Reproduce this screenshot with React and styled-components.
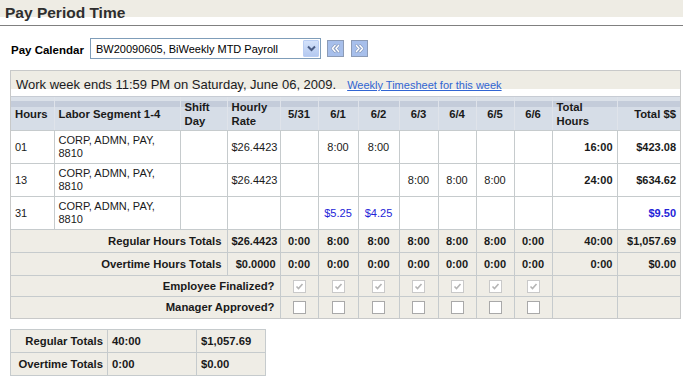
import React from 'react';
import styled, { createGlobalStyle } from 'styled-components';

const GlobalStyle = createGlobalStyle`
    body {
        margin: 0;
        background: #fff;
        font-family: "Liberation Sans", Arial, sans-serif;
        color: #111;
    }
`;

const days = ['5/31', '6/1', '6/2', '6/3', '6/4', '6/5', '6/6'];
const widths = [43, 126, 47, 53, 38, 40, 41, 39, 38, 38, 38, 65, 63];

const entries = [
    { code: '01', rate: '$26.4423', days: ['', '8:00', '8:00', '', '', '', ''], hours: '16:00', total: '$423.08' },
    { code: '13', rate: '$26.4423', days: ['', '', '', '8:00', '8:00', '8:00', ''], hours: '24:00', total: '$634.62' },
    { code: '31', rate: '', days: ['', '$5.25', '$4.25', '', '', '', ''], hours: '', total: '$9.50', money: true },
];

const totals = [
    { label: 'Regular Hours Totals', rate: '$26.4423', days: ['0:00', '8:00', '8:00', '8:00', '8:00', '8:00', '0:00'], hours: '40:00', total: '$1,057.69', h: 23 },
    { label: 'Overtime Hours Totals', rate: '$0.0000', days: ['0:00', '0:00', '0:00', '0:00', '0:00', '0:00', '0:00'], hours: '0:00', total: '$0.00', h: 23 },
];

function Chevrons({ dir }) {
    const d = dir === 'left'
        ? 'M8 5 L5 8.5 L8 12 M12 5 L9 8.5 L12 12'
        : 'M5 5 L8 8.5 L5 12 M9 5 L12 8.5 L9 12';
    return (
        <svg width="15" height="15" viewBox="0 0 17 17">
            <path d={d} fill="none" stroke="#7f93b8" strokeWidth="3" strokeLinecap="round" strokeLinejoin="round" />
            <path d={d} fill="none" stroke="#fff" strokeWidth="1.7" strokeLinecap="round" strokeLinejoin="round" />
        </svg>
    );
}

function CheckBox({ checked }) {
    return (
        <Box $checked={checked}>
            {checked && (
                <svg width="9" height="9" viewBox="0 0 9 9">
                    <path d="M1.5 4.5 L3.5 6.5 L7.5 2" fill="none" stroke="#b5b5b5" strokeWidth="1.6" />
                </svg>
            )}
        </Box>
    );
}

function App() {
    return (
        <Page>
            <GlobalStyle />
            <TitleBar>
                <h1>Pay Period Time</h1>
            </TitleBar>
            <Rule />
            <CalendarRow>
                <label>Pay Calendar</label>
                <SelectBox>
                    <span>BW20090605, BiWeekly MTD Payroll</span>
                    <ArrowButton>
                        <svg width="9" height="7" viewBox="0 0 9 7">
                            <path d="M1 1.5 L4.5 5 L8 1.5" fill="none" stroke="#4a5d85" strokeWidth="2" />
                        </svg>
                    </ArrowButton>
                </SelectBox>
                <NavButton><Chevrons dir="left" /></NavButton>
                <NavButton><Chevrons dir="right" /></NavButton>
            </CalendarRow>

            <Panel>
                <WeekBar>
                    Work week ends 11:59 PM on Saturday, June 06, 2009.
                    <a href="#week">Weekly Timesheet for this week</a>
                </WeekBar>
                <Spacer />
                <TimeTable>
                    <colgroup>
                        {widths.map((w, i) => <Col key={i} $w={w} />)}
                    </colgroup>
                    <thead>
                        <tr>
                            <Head>Hours</Head>
                            <Head>Labor Segment 1-4</Head>
                            <Head>Shift<br />Day</Head>
                            <Head>Hourly<br />Rate</Head>
                            {days.map(d => <Head key={d} $align="center">{d}</Head>)}
                            <Head>Total<br />Hours</Head>
                            <Head $align="right">Total $$</Head>
                        </tr>
                    </thead>
                    <tbody>
                        {entries.map(e => (
                            <Row key={e.code} $h={33}>
                                <Cell>{e.code}</Cell>
                                <Cell>CORP, ADMN, PAY,<br />8810</Cell>
                                <Cell />
                                <Cell>{e.rate}</Cell>
                                {e.days.map((v, i) => (
                                    <Cell key={i} $align="center" $blue={e.money}>{v}</Cell>
                                ))}
                                <Cell $align="right" $bold>{e.hours}</Cell>
                                <Cell $align="right" $bold $blue={e.money}>{e.total}</Cell>
                            </Row>
                        ))}
                        {totals.map(t => (
                            <Row key={t.label} $beige $h={t.h}>
                                <Cell colSpan={3} $align="right" $bold $label>{t.label}</Cell>
                                <Cell $align="right" $bold>{t.rate}</Cell>
                                {t.days.map((v, i) => (
                                    <Cell key={i} $align="center" $bold>{v}</Cell>
                                ))}
                                <Cell $align="right" $bold>{t.hours}</Cell>
                                <Cell $align="right" $bold>{t.total}</Cell>
                            </Row>
                        ))}
                        <Row $beige $h={21}>
                            <Cell colSpan={4} $align="right" $bold $label>Employee Finalized?</Cell>
                            {days.map(d => (
                                <Cell key={d} $align="center"><CheckBox checked /></Cell>
                            ))}
                            <Cell />
                            <Cell />
                        </Row>
                        <Row $beige $h={21}>
                            <Cell colSpan={4} $align="right" $bold $label>Manager Approved?</Cell>
                            {days.map(d => (
                                <Cell key={d} $align="center"><CheckBox /></Cell>
                            ))}
                            <Cell />
                            <Cell />
                        </Row>
                    </tbody>
                </TimeTable>
            </Panel>

            <SummaryTable>
                <colgroup>
                    <Col $w={97} />
                    <Col $w={89} />
                    <Col $w={69} />
                </colgroup>
                <tbody>
                    <tr>
                        <SumCell $align="right">Regular Totals</SumCell>
                        <SumCell>40:00</SumCell>
                        <SumCell>$1,057.69</SumCell>
                    </tr>
                    <tr>
                        <SumCell $align="right">Overtime Totals</SumCell>
                        <SumCell>0:00</SumCell>
                        <SumCell>$0.00</SumCell>
                    </tr>
                </tbody>
            </SummaryTable>
        </Page>
    );
}

const Page = styled.div`
    width: 683px;
    padding-bottom: 4px;
`;

const TitleBar = styled.div`
    height: 17px;
    background: #eeece4;
    h1 {
        margin: 0;
        padding: 4px 0 0 5px;
        font-size: 15.5px;
        line-height: 17px;
        font-weight: bold;
        color: #2e2e2e;
        white-space: nowrap;
    }
`;

const Rule = styled.div`
    margin-top: 8px;
    border-top: 1px solid #808080;
`;

const CalendarRow = styled.div`
    display: flex;
    align-items: center;
    margin-top: 12px;
    padding-left: 11px;
    height: 21px;
    label {
        font-size: 11.5px;
        font-weight: bold;
        color: #000;
        width: 79px;
        padding-top: 2px;
    }
`;

const SelectBox = styled.div`
    box-sizing: border-box;
    width: 231px;
    height: 21px;
    border: 1px solid #7f9db9;
    display: flex;
    align-items: center;
    justify-content: space-between;
    padding: 1px 1px 1px 5px;
    background: #fff;
    font-size: 11px;
    color: #000;
    margin-right: 6px;
`;

const ArrowButton = styled.div`
    box-sizing: border-box;
    width: 16px;
    height: 17px;
    border: 1px solid #b9cdf3;
    border-radius: 1px;
    background: linear-gradient(to bottom, #d4e2fb, #b4c9f0);
    display: flex;
    align-items: center;
    justify-content: center;
`;

const NavButton = styled.div`
    box-sizing: border-box;
    width: 17px;
    height: 17px;
    border: 1px solid #8c9bb6;
    background: #a7bfeb;
    display: flex;
    align-items: center;
    justify-content: center;
    margin-right: 7px;
`;

const Panel = styled.div`
    margin: 11px 0 0 10px;
    width: 671px;
    box-sizing: border-box;
    border: 1px solid #c8c9c9;
`;

const WeekBar = styled.div`
    box-sizing: border-box;
    height: 18px;
    padding: 5px 0 0 5px;
    background: #eeece4;
    font-size: 13px;
    line-height: 18px;
    color: #1b1b22;
    white-space: nowrap;
    a {
        margin-left: 11px;
        font-size: 11px;
        color: #3165d3;
        text-decoration: underline;
    }
`;

const Spacer = styled.div`
    height: 7px;
    border-bottom: 1px solid #c7ccd4;
`;

const TimeTable = styled.table`
    width: 669px;
    table-layout: fixed;
    border-collapse: collapse;
    border-style: hidden;
    font-size: 11px;
`;

const Col = styled.col`
    width: ${p => p.$w}px;
`;

const Head = styled.th`
    height: 33px;
    padding: 0 4px;
    text-align: ${p => p.$align || 'left'};
    vertical-align: middle;
    font-size: 11.3px;
    font-weight: bold;
    line-height: 14px;
    color: #1a1a1a;
    border: 1px solid #dfe3ea;
    border-bottom-color: #c6cbcd;
    background: linear-gradient(to bottom,
        #dbe1e9 0, #dbe1e9 4px,
        #c4ccda 4px, #c4ccda 10px,
        #d6dde7 10px, #d6dde7 100%);
`;

const Row = styled.tr`
    height: ${p => p.$h}px;
    background: ${p => (p.$beige ? '#efede6' : '#fff')};
`;

const Cell = styled.td`
    padding: ${p => (p.$label ? '0 5px 0 4px' : '0 4px')};
    text-align: ${p => p.$align || 'left'};
    vertical-align: middle;
    font-size: ${p => (p.$label ? '11.3px' : '11px')};
    line-height: 13px;
    font-weight: ${p => (p.$bold ? 'bold' : 'normal')};
    color: ${p => (p.$blue ? '#2424d8' : '#1a1a1a')};
    border: 1px solid #c6cbcd;
    white-space: nowrap;
`;

const Box = styled.span`
    display: inline-block;
    box-sizing: border-box;
    width: 13px;
    height: 13px;
    vertical-align: middle;
    border: 1px solid ${p => (p.$checked ? '#c9c9c9' : '#a9a9a9')};
    background: #fff;
    line-height: 0;
    padding: 1px;
`;

const SummaryTable = styled.table`
    margin: 10px 0 0 10px;
    width: 256px;
    table-layout: fixed;
    border-collapse: collapse;
    background: #efede6;
`;

const SumCell = styled.td`
    height: 22px;
    padding: 0 4px;
    text-align: ${p => p.$align || 'left'};
    font-size: 11.3px;
    font-weight: bold;
    color: #1a1a1a;
    border: 1px solid #c6cbcd;
    white-space: nowrap;
`;

export default App;
